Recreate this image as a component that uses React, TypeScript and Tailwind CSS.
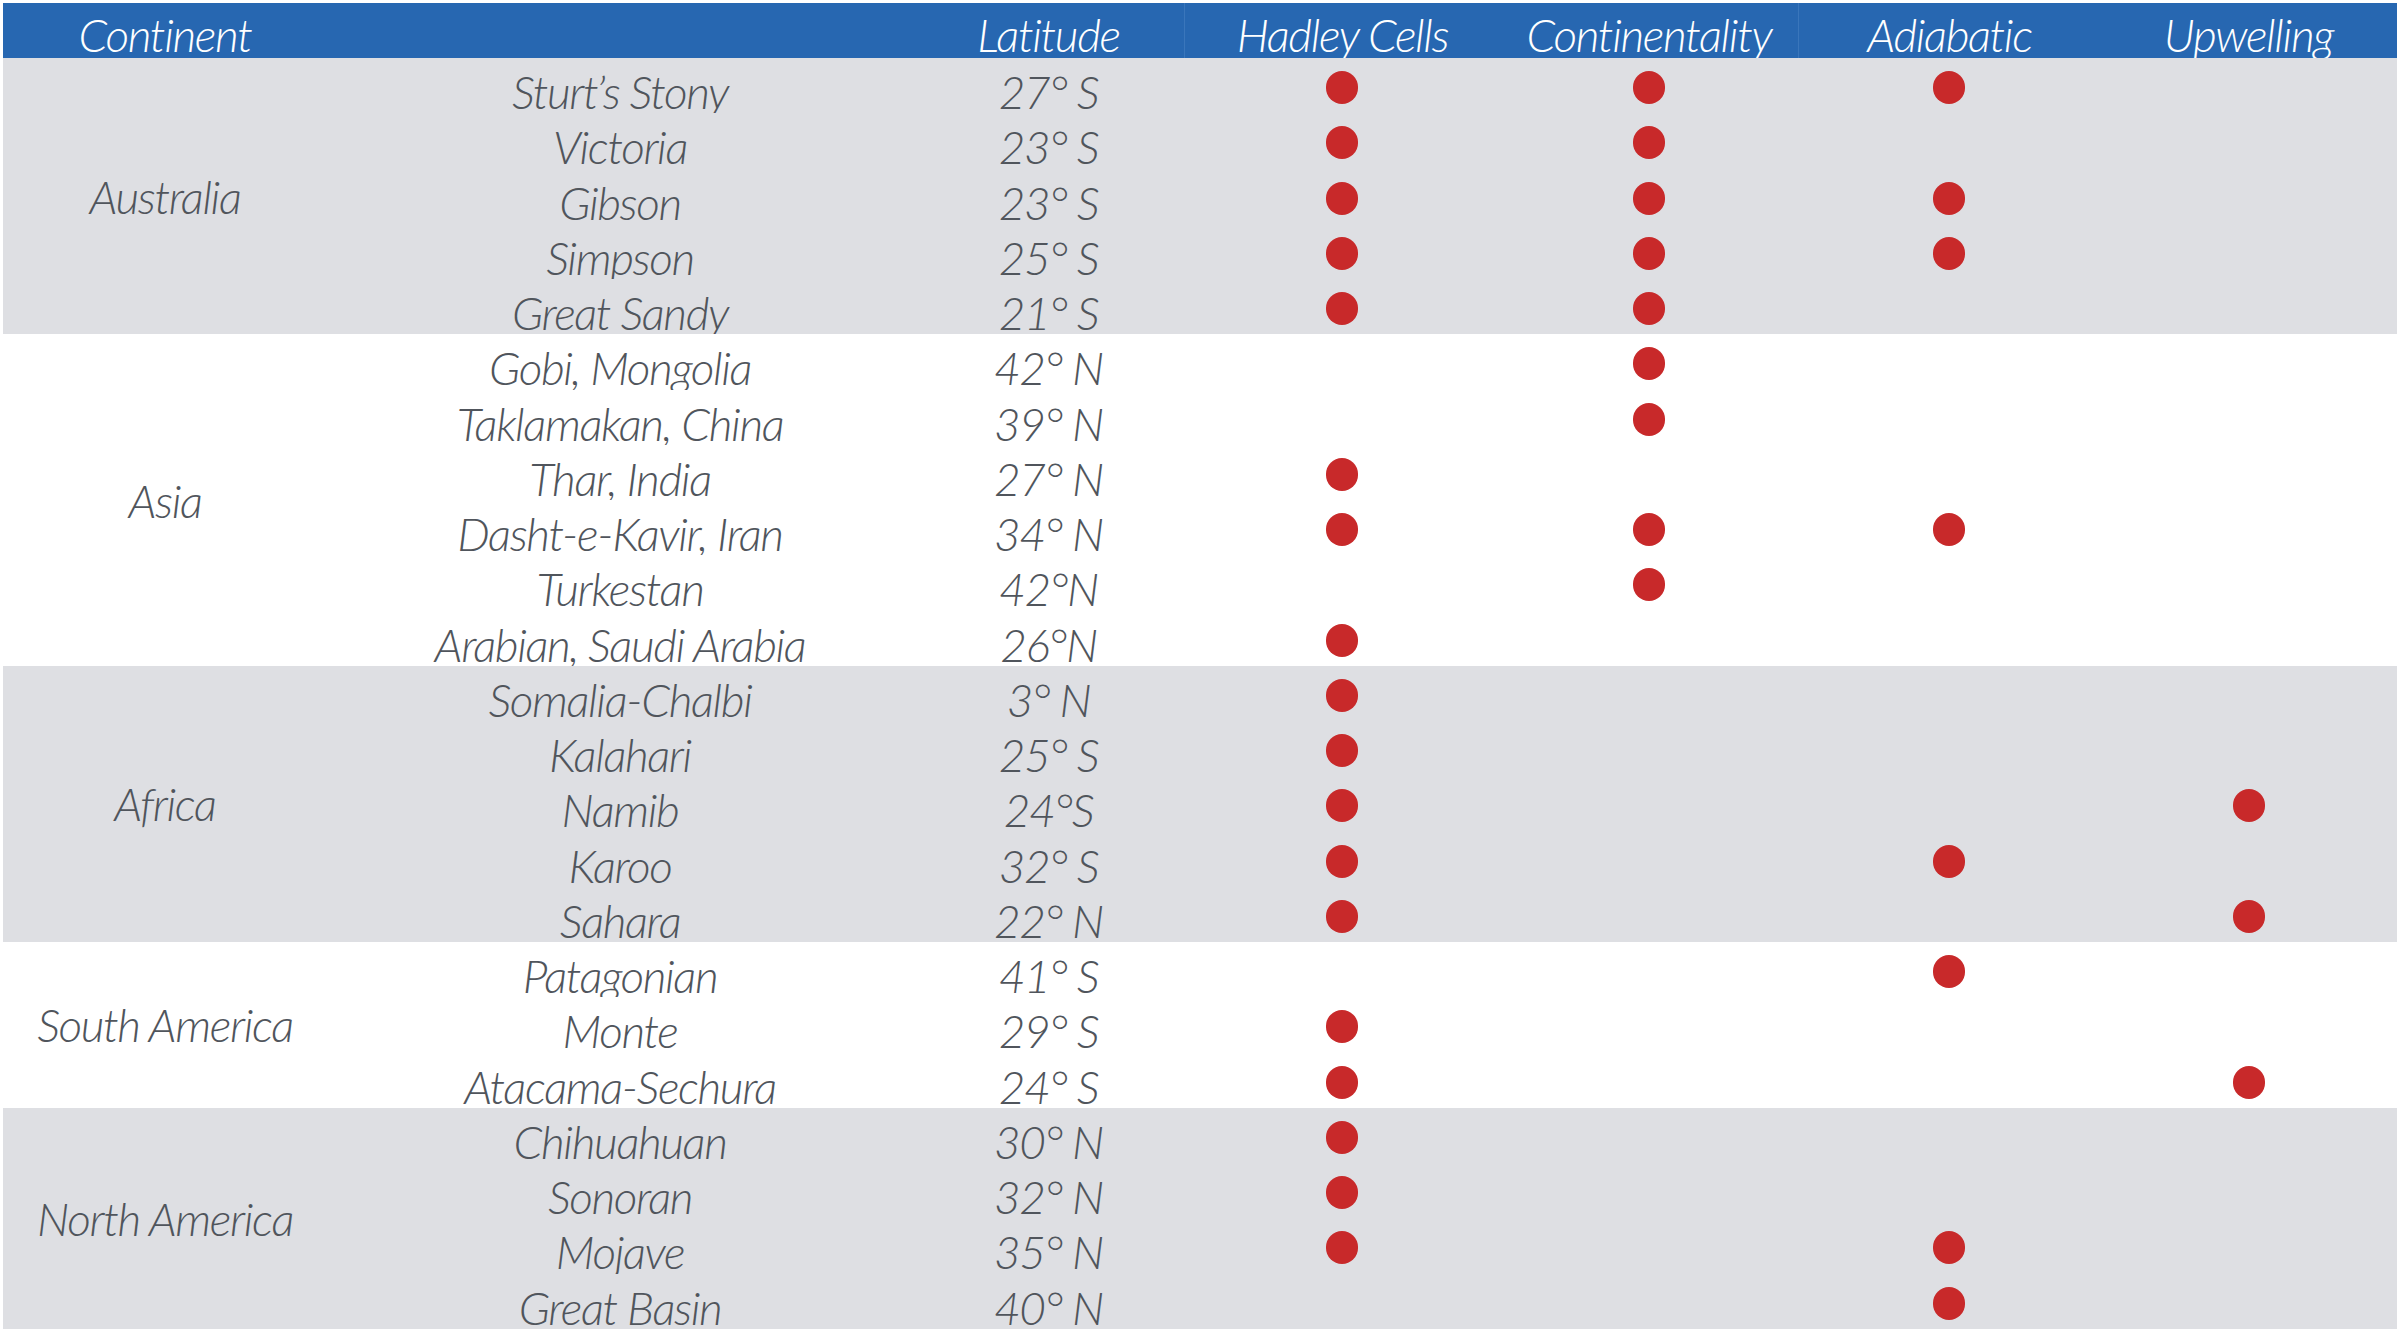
import React from "react";

type Row = { name: string; lat: string; h?: boolean; c?: boolean; a?: boolean; u?: boolean };
type Group = { continent: string; gray: boolean; rows: Row[] };

const groups: Group[] = [
  {
    continent: "Australia",
    gray: true,
    rows: [
      { name: "Sturt\u2019s Stony", lat: "27° S", h: true, c: true, a: true },
      { name: "Victoria", lat: "23° S", h: true, c: true },
      { name: "Gibson", lat: "23° S", h: true, c: true, a: true },
      { name: "Simpson", lat: "25° S", h: true, c: true, a: true },
      { name: "Great Sandy", lat: "21° S", h: true, c: true },
    ],
  },
  {
    continent: "Asia",
    gray: false,
    rows: [
      { name: "Gobi, Mongolia", lat: "42° N", c: true },
      { name: "Taklamakan, China", lat: "39° N", c: true },
      { name: "Thar, India", lat: "27° N", h: true },
      { name: "Dasht-e-Kavir, Iran", lat: "34° N", h: true, c: true, a: true },
      { name: "Turkestan", lat: "42°N", c: true },
      { name: "Arabian, Saudi Arabia", lat: "26°N", h: true },
    ],
  },
  {
    continent: "Africa",
    gray: true,
    rows: [
      { name: "Somalia-Chalbi", lat: "3° N", h: true },
      { name: "Kalahari", lat: "25° S", h: true },
      { name: "Namib", lat: "24°S", h: true, u: true },
      { name: "Karoo", lat: "32° S", h: true, a: true },
      { name: "Sahara", lat: "22° N", h: true, u: true },
    ],
  },
  {
    continent: "South America",
    gray: false,
    rows: [
      { name: "Patagonian", lat: "41° S", a: true },
      { name: "Monte", lat: "29° S", h: true },
      { name: "Atacama-Sechura", lat: "24° S", h: true, u: true },
    ],
  },
  {
    continent: "North America",
    gray: true,
    rows: [
      { name: "Chihuahuan", lat: "30° N", h: true },
      { name: "Sonoran", lat: "32° N", h: true },
      { name: "Mojave", lat: "35° N", h: true, a: true },
      { name: "Great Basin", lat: "40° N", a: true },
    ],
  },
];

const fontCls = "font-['Lato','Open_Sans',sans-serif] italic font-light";

function Dot({ on }: { on?: boolean }) {
  return (
    <div className="flex h-full items-center justify-center pt-[4px]">
      {on ? <div className="h-[33px] w-[32px] rounded-full bg-[#c8292a]" /> : null}
    </div>
  );
}

function TextCell({ children }: { children: React.ReactNode }) {
  return (
    <div className="h-full overflow-hidden whitespace-nowrap pt-[6px] text-center text-[46px] leading-[55px] tracking-[-0.03em] text-[#50555c]">
      {children}
    </div>
  );
}

export default function App() {
  return (
    <div className={`min-h-[1332px] w-[2400px] bg-white pl-[3px] pt-[3px] ${fontCls}`}>
      <div className="w-[2394px]">
        {/* Header */}
        <div className="grid h-[55px] grid-cols-[324px_586px_271px_316px_298px_302px_297px] bg-[#2767b1] text-white">
          {["Continent", "", "Latitude", "Hadley Cells", "Continentality", "Adiabatic", "Upwelling"].map((t, i) => (
            <div
              key={i}
              className={`h-full overflow-hidden whitespace-nowrap pt-[4px] text-center text-[46px] leading-[55px] tracking-[-0.03em] ${
                i === 3 || i === 5 ? "border-l border-[#3a76bb]" : ""
              }`}
            >
              {t}
            </div>
          ))}
        </div>
        {groups.map((g) => (
          <div key={g.continent} className={`flex ${g.gray ? "bg-[#dedfe3]" : "bg-white"}`}>
            <div className="flex w-[324px] items-center justify-center text-[46px] tracking-[-0.03em] text-[#50555c]">
              {g.continent}
            </div>
            <div className="flex flex-1 flex-col">
              {g.rows.map((r) => (
                <div
                  key={r.name}
                  className="grid h-[55.25px] grid-cols-[586px_271px_316px_298px_302px_297px]"
                >
                  <TextCell>{r.name}</TextCell>
                  <TextCell>{r.lat}</TextCell>
                  <Dot on={r.h} />
                  <Dot on={r.c} />
                  <Dot on={r.a} />
                  <Dot on={r.u} />
                </div>
              ))}
            </div>
          </div>
        ))}
      </div>
    </div>
  );
}
